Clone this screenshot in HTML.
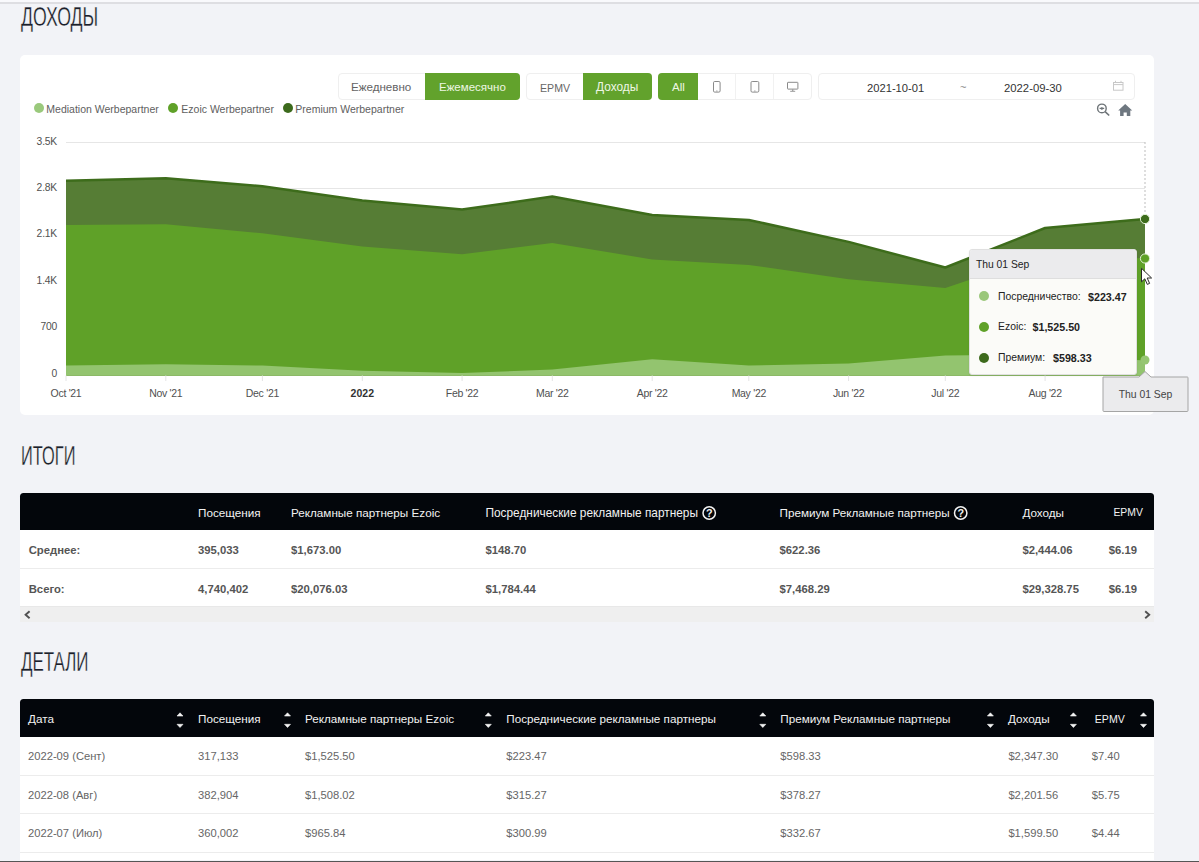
<!DOCTYPE html>
<html><head><meta charset="utf-8">
<style>
*{box-sizing:border-box;margin:0;padding:0}
html,body{width:1199px;height:862px;overflow:hidden;background:#f2f3f7;font-family:"Liberation Sans",sans-serif;position:relative}
.t{position:absolute;white-space:nowrap;line-height:20px;height:20px}
.h{position:absolute;font-size:27.5px;line-height:30px;color:#1b1f2a;-webkit-text-stroke:0.3px #f2f3f7;transform-origin:0 50%;white-space:nowrap}
#topline{position:absolute;left:0;top:2px;width:1199px;height:2px;background:#dedee2;box-shadow:0 -2px 0 #f9f9fc}
#card{position:absolute;left:20px;top:55px;width:1134px;height:360px;background:#fff;border-radius:5px}
.grp{position:absolute;top:73px;height:27px;border:1px solid #efefef;border-radius:4px;background:#fff}
.btn{position:absolute;top:-1px;height:27px;background:#62a22c}
.lbl{color:#636363;font-size:11px}
svg{position:absolute;left:0;top:0}
.tbl-head{position:absolute;left:20px;width:1134px;background:#03060b;border-radius:3.5px 3.5px 0 0}
.th{color:#f2f2f2;font-size:11.7px}
.td{color:#555;font-size:11.3px;font-weight:700}
.tr{color:#666;font-size:11.2px}
.row{position:absolute;left:20px;width:1134px;background:#fff}
.sep{position:absolute;left:20px;width:1134px;height:1px;background:#ececec}
</style></head><body>
<div id="topline"></div>
<div class="h" style="left:21px;top:1.9px;transform:scaleX(0.644)">ДОХОДЫ</div>

<div id="card"></div>

<!-- button groups -->
<div class="grp" style="left:338px;width:182px"><div class="btn" style="left:86px;width:95px;border-radius:0 4px 4px 0"></div></div>
<div class="t lbl" style="left:351px;top:77px;font-size:11.6px">Ежедневно</div>
<div class="t" style="left:439px;top:77px;font-size:11.5px;color:#eef7e4">Ежемесячно</div>

<div class="grp" style="left:526px;width:126px"><div class="btn" style="left:56px;width:69px;border-radius:0 4px 4px 0"></div></div>
<div class="t lbl" style="left:540px;top:78px;font-size:10.6px;color:#666">EPMV</div>
<div class="t" style="left:596px;top:77px;font-size:11.9px;color:#eef7e4">Доходы</div>

<div class="grp" style="left:658px;width:154px"><div class="btn" style="left:-1px;width:40px;border-radius:4px 0 0 4px"></div>
 <div style="position:absolute;left:76px;top:0;width:1px;height:25px;background:#f1f1f1"></div>
 <div style="position:absolute;left:114px;top:0;width:1px;height:25px;background:#f1f1f1"></div>
</div>
<div class="t" style="left:672px;top:77px;font-size:11.5px;color:#eef7e4">All</div>

<div class="grp" style="left:818px;width:317px"></div>
<div class="t" style="left:867px;top:78px;font-size:11.2px;color:#333">2021-10-01</div>
<div class="t" style="left:960px;top:77px;font-size:11px;color:#888">~</div>
<div class="t" style="left:1004px;top:78px;font-size:11.3px;color:#333">2022-09-30</div>

<!-- legend -->
<div style="position:absolute;left:34px;top:103px;width:10px;height:10px;border-radius:5px;background:#9ac97c"></div>
<div class="t lbl" style="left:46.3px;top:99.3px;font-size:10.5px;color:#606060">Mediation Werbepartner</div>
<div style="position:absolute;left:168px;top:103px;width:10px;height:10px;border-radius:5px;background:#5fa128"></div>
<div class="t lbl" style="left:181.3px;top:99.3px;font-size:10.5px;color:#606060">Ezoic Werbepartner</div>
<div style="position:absolute;left:283px;top:103px;width:10px;height:10px;border-radius:5px;background:#3c6a1c"></div>
<div class="t lbl" style="left:295.3px;top:99.3px;font-size:10.5px;color:#606060">Premium Werbepartner</div>

<svg width="1199" height="862" viewBox="0 0 1199 862">
 <g stroke="#e6e6e6" stroke-width="1">
  <line x1="66" y1="142.5" x2="1145" y2="142.5"/>
  <line x1="66" y1="188.5" x2="1145" y2="188.5"/>
  <line x1="66" y1="235.5" x2="1145" y2="235.5"/>
  <line x1="66" y1="282.5" x2="1145" y2="282.5"/>
  <line x1="66" y1="328.5" x2="1145" y2="328.5"/>
 </g>
 <polygon fill="#567d35" points="66,375.5 66,180.7 165.8,178.2 262.4,186.3 362.3,200.5 462.1,209.5 552.3,196.6 652.2,215 748.8,220 848.6,241.9 945.3,267.5 1045.1,228 1145,219 1145,375.5"/>
 <polygon fill="#5fa128" points="66,375.5 66,225.1 165.8,224.3 262.4,233.3 362.3,246.5 462.1,254.3 552.3,243 652.2,259.4 748.8,264.9 848.6,279.3 945.3,288 1045.1,254.5 1145,258.6 1145,375.5"/>
 <polygon fill="#93c46f" points="66,375.5 66,365.5 165.8,364.2 262.4,365.5 362.3,370.8 462.1,373 552.3,369.6 652.2,359.3 748.8,365.5 848.6,363.6 945.3,355.4 1045.1,354.5 1145,360.6 1145,375.5"/>
 <g stroke="#e4e4e4" stroke-width="1"><line x1="66" y1="375.5" x2="66" y2="381" /><line x1="165.8" y1="375.5" x2="165.8" y2="381" /><line x1="262.4" y1="375.5" x2="262.4" y2="381" /><line x1="362.3" y1="375.5" x2="362.3" y2="381" /><line x1="462.1" y1="375.5" x2="462.1" y2="381" /><line x1="552.3" y1="375.5" x2="552.3" y2="381" /><line x1="652.2" y1="375.5" x2="652.2" y2="381" /><line x1="748.8" y1="375.5" x2="748.8" y2="381" /><line x1="848.6" y1="375.5" x2="848.6" y2="381" /><line x1="945.3" y1="375.5" x2="945.3" y2="381" /><line x1="1045.1" y1="375.5" x2="1045.1" y2="381" /></g>
 <polyline fill="none" stroke="#3d6c1b" stroke-width="2.5" stroke-linejoin="round" points="66,180.7 165.8,178.2 262.4,186.3 362.3,200.5 462.1,209.5 552.3,196.6 652.2,215 748.8,220 848.6,241.9 945.3,267.5 1045.1,228 1145,219"/>
 <line x1="1145" y1="142" x2="1145" y2="215" stroke="#bdbdbd" stroke-width="1" stroke-dasharray="2,2"/>
 <circle cx="1145" cy="219" r="4.6" fill="#3d6c1b" stroke="#e4f2d8" stroke-width="1"/>
 <circle cx="1145" cy="258.5" r="4.6" fill="#5fa128" stroke="#e4f2d8" stroke-width="1"/>
 <circle cx="1145" cy="360" r="4.5" fill="#96c672"/>
</svg>

<!-- y axis labels -->
<div class="t" style="left:0;width:57px;text-align:right;top:132px;font-size:10.3px;color:#505050;letter-spacing:-0.2px">3.5K</div>
<div class="t" style="left:0;width:57px;text-align:right;top:178px;font-size:10.3px;color:#505050;letter-spacing:-0.2px">2.8K</div>
<div class="t" style="left:0;width:57px;text-align:right;top:224px;font-size:10.3px;color:#505050;letter-spacing:-0.2px">2.1K</div>
<div class="t" style="left:0;width:57px;text-align:right;top:271px;font-size:10.3px;color:#505050;letter-spacing:-0.2px">1.4K</div>
<div class="t" style="left:0;width:57px;text-align:right;top:317px;font-size:10.3px;color:#505050;letter-spacing:-0.2px">700</div>
<div class="t" style="left:0;width:57px;text-align:right;top:364px;font-size:10.3px;color:#505050;letter-spacing:-0.2px">0</div>

<!-- x axis labels -->
<div class="t" style="left:16px;width:100px;text-align:center;top:383.3px;font-size:10.5px;color:#505050;letter-spacing:-0.3px">Oct '21</div>
<div class="t" style="left:115.8px;width:100px;text-align:center;top:383.3px;font-size:10.5px;color:#505050;letter-spacing:-0.3px">Nov '21</div>
<div class="t" style="left:212.4px;width:100px;text-align:center;top:383.3px;font-size:10.5px;color:#505050;letter-spacing:-0.3px">Dec '21</div>
<div class="t" style="left:312.3px;width:100px;text-align:center;top:382.6px;font-size:10.5px;color:#333;font-weight:700">2022</div>
<div class="t" style="left:412.1px;width:100px;text-align:center;top:383.3px;font-size:10.5px;color:#505050;letter-spacing:-0.3px">Feb '22</div>
<div class="t" style="left:502.3px;width:100px;text-align:center;top:383.3px;font-size:10.5px;color:#505050;letter-spacing:-0.3px">Mar '22</div>
<div class="t" style="left:602.2px;width:100px;text-align:center;top:383.3px;font-size:10.5px;color:#505050;letter-spacing:-0.3px">Apr '22</div>
<div class="t" style="left:698.8px;width:100px;text-align:center;top:383.3px;font-size:10.5px;color:#505050;letter-spacing:-0.3px">May '22</div>
<div class="t" style="left:798.6px;width:100px;text-align:center;top:383.3px;font-size:10.5px;color:#505050;letter-spacing:-0.3px">Jun '22</div>
<div class="t" style="left:895.3px;width:100px;text-align:center;top:383.3px;font-size:10.5px;color:#505050;letter-spacing:-0.3px">Jul '22</div>
<div class="t" style="left:995.1px;width:100px;text-align:center;top:383.3px;font-size:10.5px;color:#505050;letter-spacing:-0.3px">Aug '22</div>

<!-- SECTIONS -->
<div class="h" style="left:21px;top:440.5px;transform:scaleX(0.596)">ИТОГИ</div>
<div class="h" style="left:21px;top:647.4px;transform:scaleX(0.616)">ДЕТАЛИ</div>

<div class="tbl-head" style="top:493px;height:37px"></div>
<div class="row" style="top:530px;height:76px"></div>
<div class="sep" style="top:568px"></div>
<div style="position:absolute;left:20px;top:606px;width:1134px;height:16px;background:#efefef;border-top:1px solid #e8e8e8"></div>
<div class="t th" style="left:198px;top:503px;">Посещения</div>
<div class="t th" style="left:291px;top:503px;">Рекламные партнеры Ezoic</div>
<div class="t th" style="left:485.5px;top:503px;font-size:11.85px">Посреднические рекламные партнеры</div>
<div class="t th" style="left:779.5px;top:503px;">Премиум Рекламные партнеры</div>
<div class="t th" style="left:1022.4px;top:503px;">Доходы</div>
<div class="t th" style="left:1113.4px;top:503px;font-size:10.4px">EPMV</div>
<div class="t td" style="left:28.7px;top:540px;">Среднее:</div>
<div class="t td" style="left:198px;top:540px;">395,033</div>
<div class="t td" style="left:291px;top:540px;">$1,673.00</div>
<div class="t td" style="left:485.5px;top:540px;">$148.70</div>
<div class="t td" style="left:779.5px;top:540px;">$622.36</div>
<div class="t td" style="left:1022.4px;top:540px;">$2,444.06</div>
<div class="t td" style="left:1108.7px;top:540px;">$6.19</div>
<div class="t td" style="left:28.7px;top:578.7px;">Всего:</div>
<div class="t td" style="left:198px;top:578.7px;">4,740,402</div>
<div class="t td" style="left:291px;top:578.7px;">$20,076.03</div>
<div class="t td" style="left:485.5px;top:578.7px;">$1,784.44</div>
<div class="t td" style="left:779.5px;top:578.7px;">$7,468.29</div>
<div class="t td" style="left:1022.4px;top:578.7px;">$29,328.75</div>
<div class="t td" style="left:1108.7px;top:578.7px;">$6.19</div>
<div class="tbl-head" style="top:699px;height:38px"></div>
<div class="row" style="top:737px;height:123px"></div>
<div class="sep" style="top:775px"></div>
<div class="sep" style="top:813px"></div>
<div class="sep" style="top:852px"></div>
<div style="position:absolute;left:0;top:861px;width:1199px;height:1px;background:#555"></div>
<div class="t th" style="left:28px;top:709px;">Дата</div>
<div class="t th" style="left:198px;top:709px;">Посещения</div>
<div class="t th" style="left:305px;top:709px;">Рекламные партнеры Ezoic</div>
<div class="t th" style="left:506.3px;top:709px;">Посреднические рекламные партнеры</div>
<div class="t th" style="left:780.3px;top:709px;">Премиум Рекламные партнеры</div>
<div class="t th" style="left:1008px;top:709px;">Доходы</div>
<div class="t th" style="left:1094.8px;top:709px;font-size:10.6px">EPMV</div>
<div class="t tr" style="left:28px;top:746px;">2022-09 (Сент)</div>
<div class="t tr" style="left:198px;top:746px;">317,133</div>
<div class="t tr" style="left:305px;top:746px;">$1,525.50</div>
<div class="t tr" style="left:506.3px;top:746px;">$223.47</div>
<div class="t tr" style="left:780.3px;top:746px;">$598.33</div>
<div class="t tr" style="left:1008.4px;top:746px;">$2,347.30</div>
<div class="t tr" style="left:1091.8px;top:746px;">$7.40</div>
<div class="t tr" style="left:28px;top:785px;">2022-08 (Авг)</div>
<div class="t tr" style="left:198px;top:785px;">382,904</div>
<div class="t tr" style="left:305px;top:785px;">$1,508.02</div>
<div class="t tr" style="left:506.3px;top:785px;">$315.27</div>
<div class="t tr" style="left:780.3px;top:785px;">$378.27</div>
<div class="t tr" style="left:1008.4px;top:785px;">$2,201.56</div>
<div class="t tr" style="left:1091.8px;top:785px;">$5.75</div>
<div class="t tr" style="left:28px;top:822.8px;">2022-07 (Июл)</div>
<div class="t tr" style="left:198px;top:822.8px;">360,002</div>
<div class="t tr" style="left:305px;top:822.8px;">$965.84</div>
<div class="t tr" style="left:506.3px;top:822.8px;">$300.99</div>
<div class="t tr" style="left:780.3px;top:822.8px;">$332.67</div>
<div class="t tr" style="left:1008.4px;top:822.8px;">$1,599.50</div>
<div class="t tr" style="left:1091.8px;top:822.8px;">$4.44</div>
<svg width="1199" height="862" style="position:absolute;left:0;top:0;pointer-events:none"><path d="M29.6,611.2 L25.6,614.7 L29.6,618.2" fill="none" stroke="#505050" stroke-width="1.9"/><path d="M1145.2,611.2 L1149.2,614.7 L1145.2,618.2" fill="none" stroke="#505050" stroke-width="1.9"/><g fill="none" stroke="#f2f2f2" stroke-width="1.5"><circle cx="709.2" cy="513" r="6.2"/><circle cx="960.7" cy="513" r="6.2"/></g></svg>
<div class="t" style="left:704.2px;top:503.3px;width:10px;text-align:center;font-size:10.8px;font-weight:700;color:#f2f2f2">?</div>
<div class="t" style="left:955.7px;top:503.3px;width:10px;text-align:center;font-size:10.8px;font-weight:700;color:#f2f2f2">?</div>
<svg width="1199" height="862" style="position:absolute;left:0;top:0"><g fill="#f4f4f4" stroke="#f4f4f4" stroke-width="0.6" stroke-linejoin="round"><path d="M177,716 L183,716 L180,712.8 Z"/><path d="M177,724.3 L183,724.3 L180,727.5 Z"/><path d="M284.5,716 L290.5,716 L287.5,712.8 Z"/><path d="M284.5,724.3 L290.5,724.3 L287.5,727.5 Z"/><path d="M485.3,716 L491.3,716 L488.3,712.8 Z"/><path d="M485.3,724.3 L491.3,724.3 L488.3,727.5 Z"/><path d="M759.8,716 L765.8,716 L762.8,712.8 Z"/><path d="M759.8,724.3 L765.8,724.3 L762.8,727.5 Z"/><path d="M987.4,716 L993.4,716 L990.4,712.8 Z"/><path d="M987.4,724.3 L993.4,724.3 L990.4,727.5 Z"/><path d="M1070.4,716 L1076.4,716 L1073.4,712.8 Z"/><path d="M1070.4,724.3 L1076.4,724.3 L1073.4,727.5 Z"/><path d="M1140.5,716 L1146.5,716 L1143.5,712.8 Z"/><path d="M1140.5,724.3 L1146.5,724.3 L1143.5,727.5 Z"/></g></svg>
<svg width="1199" height="862" style="position:absolute;left:0;top:0">
 <g fill="none" stroke="#8a8a8a" stroke-width="1">
  <rect x="713.5" y="81.5" width="6.6" height="10.6" rx="1.2"/>
  <rect x="751" y="81.5" width="7.8" height="10.6" rx="1.2"/>
  <rect x="787.5" y="82.3" width="10.4" height="6.8" rx="0.5"/>
 </g>
 <g fill="#9a9a9a"><rect x="716" y="90.6" width="1.6" height="0.8"/><rect x="754" y="90.6" width="1.6" height="0.8"/>
  <rect x="792" y="89.3" width="1.4" height="1.6"/><rect x="790.2" y="90.8" width="5" height="1"/></g>
 <g fill="none" stroke="#c8c8c8" stroke-width="1">
  <rect x="1113.5" y="82.5" width="9.5" height="7.7"/><line x1="1113.5" y1="84.6" x2="1123" y2="84.6"/>
  <line x1="1115.5" y1="80.8" x2="1115.5" y2="83"/><line x1="1121" y1="80.8" x2="1121" y2="83"/>
 </g>
 <g fill="none" stroke="#6e7478" stroke-width="1.4">
  <circle cx="1101.9" cy="108.4" r="4.3"/><line x1="1105.1" y1="111.6" x2="1109.2" y2="115.5" stroke-width="1.6"/>
  <line x1="1101.9" y1="106.9" x2="1101.9" y2="109.9" stroke-width="1.1"/><line x1="1099.6" y1="108.4" x2="1104.2" y2="108.4" stroke-width="1.3"/>
 </g>
 <path fill="#6e7780" d="M1125.2,104 L1132.2,110.5 L1130.3,110.5 L1130.3,116 L1126.8,116 L1126.8,112.5 L1123.6,112.5 L1123.6,116 L1120.1,116 L1120.1,110.5 L1118.2,110.5 Z"/>
</svg>
<div style="position:absolute;left:969px;top:249px;width:168px;height:126px;background:#fbfbf8;border:1px solid #e0e0e0;border-radius:3px;overflow:hidden;box-shadow:0 1px 2px rgba(0,0,0,0.08)">
 <div style="position:absolute;left:0;top:0;width:168px;height:29px;background:#ebebed;border-bottom:1px solid #dedede"></div>
</div>
<div class="t" style="left:976px;top:255px;font-size:10.3px;color:#222">Thu 01 Sep</div>
<div style="position:absolute;left:979px;top:291px;width:10px;height:10px;border-radius:5px;background:#9ac77a"></div>
<div style="position:absolute;left:979px;top:321.7px;width:10px;height:10px;border-radius:5px;background:#5fa128"></div>
<div style="position:absolute;left:979px;top:352.5px;width:10px;height:10px;border-radius:5px;background:#3d6a1c"></div>
<div class="t" style="left:998px;top:286.5px;font-size:10.4px;color:#222">Посредничество:</div>
<div class="t" style="left:1088px;top:286.5px;font-size:10.7px;color:#222;font-weight:700">$223.47</div>
<div class="t" style="left:998px;top:317.2px;font-size:10.4px;color:#222">Ezoic:</div>
<div class="t" style="left:1032.5px;top:317.2px;font-size:10.7px;color:#222;font-weight:700">$1,525.50</div>
<div class="t" style="left:998px;top:348px;font-size:10.4px;color:#222">Премиум:</div>
<div class="t" style="left:1053px;top:348px;font-size:10.7px;color:#222;font-weight:700">$598.33</div>

<svg width="1199" height="862" style="position:absolute;left:0;top:0">
 <path d="M1103,377 L1139,377 L1145,371.5 L1151,377 L1187.5,377 Q1188,377 1188,378 L1188,410.5 Q1188,411.5 1187,411.5 L1104,411.5 Q1103,411.5 1103,410.5 Z" fill="#ebebed" stroke="#a5a5a5" stroke-width="1"/>
</svg>
<div class="t" style="left:1103px;width:85px;text-align:center;top:385px;font-size:10.4px;color:#444">Thu 01 Sep</div>

<svg width="1199" height="862" style="position:absolute;left:0;top:0">
 <path d="M1141.5,268.3 L1141.5,281.8 L1144.8,278.8 L1147.3,284.4 L1149.6,283.4 L1147.2,278 L1151.6,278 Z" fill="#fff" stroke="#2a2a2a" stroke-width="1" stroke-linejoin="round"/>
</svg>
</body></html>
